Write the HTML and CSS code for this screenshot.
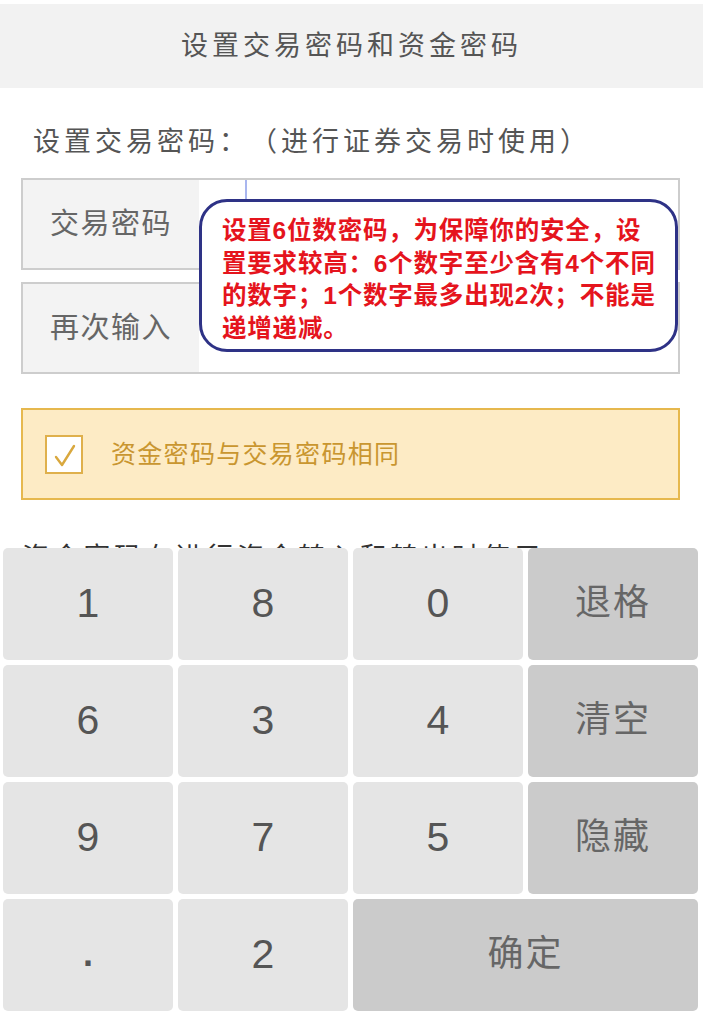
FILE: index.html
```html
<!DOCTYPE html>
<html lang="zh-CN">
<head>
<meta charset="utf-8">
<title>设置交易密码和资金密码</title>
<link rel="stylesheet" href="styles.css">
</head>
<body>
<div class="page">
  <header class="topbar"><h1 class="title">设置交易密码和资金密码</h1></header>
  <p class="section-title">设置交易密码：（进行证券交易时使用）</p>
  <div class="fields">
    <div class="field">
      <div class="field-label">交易密码</div>
      <div class="field-input"><span class="cursor"></span></div>
    </div>
    <div class="field">
      <div class="field-label">再次输入</div>
      <div class="field-input"></div>
    </div>
    <div class="tip">设置<b>6</b>位数密码，为保障你的安全，设置要求较高：<b>6</b>个数字至少含有<b>4</b>个不同的数字；<b>1</b>个数字最多出现<b>2</b>次；不能是递增递减。</div>
  </div>
  <div class="same-box">
    <span class="check">
      <svg width="34" height="35" viewBox="0 0 34 35"><path d="M9 20 L15 28 L27 9" fill="none" stroke="#d9a83e" stroke-width="2.4" stroke-linecap="round" stroke-linejoin="round"/></svg>
    </span>
    <span class="same-text">资金密码与交易密码相同</span>
  </div>
  <p class="fund-note">资金密码在进行资金转入和转出时使用</p>

  <div class="keyboard">
    <div class="key">1</div>
    <div class="key">8</div>
    <div class="key">0</div>
    <div class="key fn">退格</div>
    <div class="key">6</div>
    <div class="key">3</div>
    <div class="key">4</div>
    <div class="key fn">清空</div>
    <div class="key">9</div>
    <div class="key">7</div>
    <div class="key">5</div>
    <div class="key fn">隐藏</div>
    <div class="key dot">.</div>
    <div class="key">2</div>
    <div class="key fn wide">确定</div>
  </div>
</div>
</body>
</html>
```

FILE: styles.css
```css
* { box-sizing: border-box; }
html, body { margin: 0; padding: 0; background: #fff; }
body {
  font-family: "Liberation Sans", "Noto Sans CJK SC", sans-serif;
  width: 703px;
  height: 1015px;
  overflow: hidden;
  text-spacing-trim: space-all;
}
.page {
  position: relative;
  width: 703px;
  height: 1015px;
  padding-top: 4px;
}
.topbar {
  height: 84px;
  background: #f2f2f2;
  display: flex;
  align-items: center;
  justify-content: center;
}
.title {
  margin: 0;
  font-family: "Noto Sans CJK SC", sans-serif;
  font-weight: 400;
  font-size: 27px;
  letter-spacing: 4px;
  color: #555;
  line-height: 1;
  padding-bottom: 6px;
}
.section-title {
  margin: 36px 0 0 33px;
  font-family: "Noto Sans CJK SC", sans-serif;
  font-size: 27px;
  letter-spacing: 4px;
  line-height: 32px;
  color: #555;
}
.fields {
  position: relative;
  margin: 22px 23px 0 21px;
  display: flex;
  flex-direction: column;
  gap: 12px;
}
.field {
  height: 92px;
  border: 2px solid #cdcdcd;
  display: flex;
  background: #fff;
}
.field-label {
  width: 176px;
  background: #f3f3f3;
  display: flex;
  align-items: center;
  justify-content: center;
  font-family: "Noto Sans CJK SC", sans-serif;
  font-size: 29px;
  letter-spacing: 1.5px;
  color: #666;
  padding-bottom: 6px;
}
.field-input {
  flex: 1;
  position: relative;
}
.cursor {
  position: absolute;
  left: 46px;
  top: 0;
  width: 2px;
  height: 40px;
  background: #a9b6ef;
}
.tip {
  position: absolute;
  left: 178px;
  top: 21px;
  width: 479px;
  height: 153px;
  border: 3px solid #2e3286;
  border-radius: 28px;
  background: #fff;
  padding: 12px 14px 0 20px;
  font-family: "Noto Sans CJK SC", sans-serif;
  font-weight: 700;
  font-size: 24.5px;
  letter-spacing: 0.8px;
  line-height: 30.5px;
  color: #e5141d;
}
.tip b {
  font-family: "Liberation Sans", sans-serif;
  font-weight: 700;
}
.same-box {
  margin: 34px 23px 0 21px;
  height: 92px;
  background: #fdebc5;
  border: 2px solid #e6b84e;
  display: flex;
  align-items: center;
  padding-left: 22px;
}
.check {
  width: 38px;
  height: 39px;
  border: 2px solid #dfb04c;
  background: #fff;
  display: flex;
  align-items: center;
  justify-content: center;
}
.check svg { display: block; }
.same-text {
  margin-left: 28px;
  font-family: "Noto Sans CJK SC", sans-serif;
  font-size: 25px;
  letter-spacing: 1.3px;
  color: #c99630;
  padding-bottom: 4px;
}
.fund-note {
  margin: 40px 0 0 22px;
  font-family: "Noto Sans CJK SC", sans-serif;
  font-size: 27px;
  letter-spacing: 3.7px;
  line-height: 32px;
  color: #333;
}
.keyboard {
  position: absolute;
  left: 0;
  top: 548px;
  width: 703px;
  height: 467px;
  background: #fff;
  padding: 0 5px 0 3px;
  display: grid;
  grid-template-columns: repeat(4, 1fr);
  grid-template-rows: repeat(4, 112px);
  gap: 5px;
}
.key {
  background: #e5e5e5;
  border-radius: 5px;
  display: flex;
  align-items: center;
  justify-content: center;
  font-family: "Liberation Sans", sans-serif;
  font-size: 41px;
  color: #555;
  padding-bottom: 2px;
}
.key.fn {
  background: #cbcbcb;
  font-family: "Noto Sans CJK SC", sans-serif;
  font-size: 36px;
  letter-spacing: 2px;
  color: #666;
  padding-bottom: 10px;
}
.key.wide { grid-column: span 2; }
.key.dot { font-weight: 700; font-size: 36px; }
```
